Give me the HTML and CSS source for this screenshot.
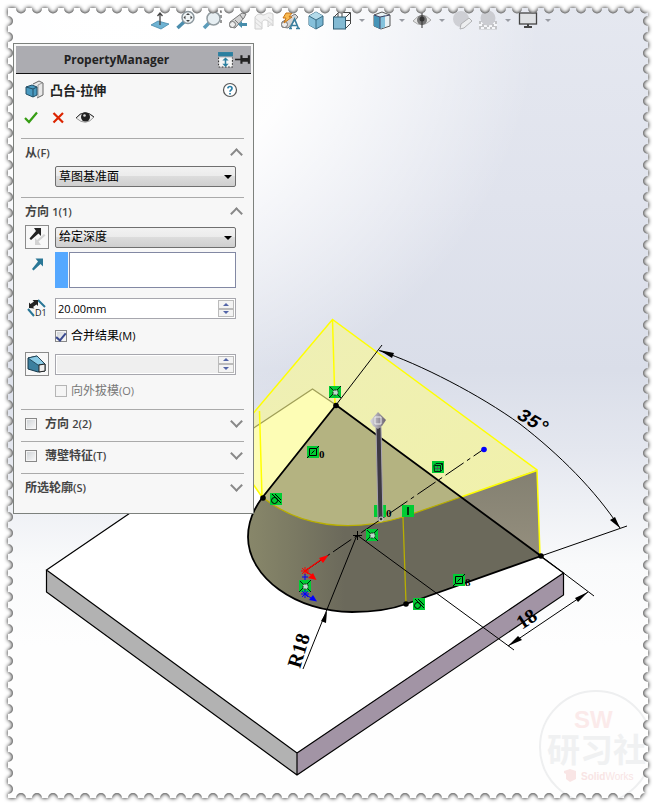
FILE: index.html
```html
<!DOCTYPE html>
<html lang="zh-CN">
<head>
<meta charset="utf-8">
<title>PropertyManager</title>
<link rel="stylesheet" href="styles.css">
</head>
<body>
<main class="stage">

<svg class="scene" viewBox="0 0 655 806" preserveAspectRatio="xMinYMin meet" aria-hidden="true">
  <defs>
    <linearGradient id="sky" x1="0" y1="0" x2="0" y2="1">
      <stop offset="0" stop-color="#e5e8f0"/>
      <stop offset=".25" stop-color="#e0e3ed"/>
      <stop offset=".46" stop-color="#dadee9"/>
      <stop offset=".56" stop-color="#e4e7ef"/>
      <stop offset=".7" stop-color="#f9fafb"/>
      <stop offset=".8" stop-color="#fefefe"/>
    </linearGradient>
    <radialGradient id="glow" gradientUnits="userSpaceOnUse" cx="120" cy="0" r="420">
      <stop offset="0" stop-color="#fff"/>
      <stop offset=".45" stop-color="#fff" stop-opacity=".95"/>
      <stop offset="1" stop-color="#fff" stop-opacity="0"/>
    </radialGradient>
    <linearGradient id="side" gradientUnits="userSpaceOnUse" x1="248" y1="0" x2="345" y2="0">
      <stop offset="0" stop-color="#88876a"/>
      <stop offset=".4" stop-color="#7d7c64"/>
      <stop offset="1" stop-color="#6b695b"/>
    </linearGradient>
    <linearGradient id="wedge" x1="0" y1="0" x2="0" y2="1">
      <stop offset="0" stop-color="#838071"/>
      <stop offset="1" stop-color="#958f7e"/>
    </linearGradient>
    <linearGradient id="rod" x1="0" x2="1">
      <stop offset="0" stop-color="#dddce2"/>
      <stop offset="1" stop-color="#6a6270"/>
    </linearGradient>
    <linearGradient id="lid" x1="0" x2="1" y2="1">
      <stop offset="0" stop-color="#eeefb6"/>
      <stop offset="1" stop-color="#f1f1aa"/>
    </linearGradient>
    <g id="g-box"><rect width="12" height="12" fill="#0c3"/></g>
    <g id="g-coin"><use href="#g-box"/><path d="M0 12 4 8M8 4l4-4M8 8l4 4M4 4 1 1" stroke="#021" fill="none"/><rect x="4" y="4" width="5" height="5" rx="1.500" stroke="#222" stroke-dasharray="2 1" fill="#bdc"/></g>
    <g id="g-plane"><use href="#g-box"/><path d="M2.500 2.500h7v7h-7zM0 12l2.500-2.500M4.500 7.500l3-3M9.500 2.500 12 0" fill="none" stroke="#000"/></g>
    <g id="g-tan"><use href="#g-box"/><circle cx="4.500" cy="7.500" r="3" fill="none" stroke="#000"/><path d="M2 1 11 10M5 1l6 6" stroke="#000"/></g>
    <g id="g-vert"><use href="#g-box"/><path d="M6 2v8" stroke="#000" stroke-width="1.500"/></g>
    <g id="g-cube"><use href="#g-box"/><path d="M2 4.500 4 2.500h6.500v6l-2 2H2.500zM2.500 4.500h6v6M8.500 4.500l2-2" fill="none" stroke="#021"/><path d="M5.500 5v5M3 7.500h5" stroke="#465"/></g>
  </defs>
  <rect width="655" height="806" fill="url(#sky)"/>
  <rect width="655" height="806" fill="url(#glow)"/>

  <!-- watermark -->
  <g>
    <circle cx="596" cy="747" r="56" fill="none" stroke="#eeeff0" stroke-width="2"/>
    <text class="mark-sw" x="574" y="728">SW</text>
    <text class="mark-cn" x="547" y="762">研习社</text>
    <path d="M564 771l6-2 6 2v8l-6 3-4-3v-5l-2-1z" fill="#f9e5e5"/>
    <text class="mark-solid" x="581" y="780"><tspan class="heavy">Solid</tspan>Works</text>
  </g>

  <!-- base plate -->
  <path d="M46 570 312 389 563 573 297 753z" fill="#fff"/>
  <path d="M46 570 297 753V775L46 592z" fill="#b2b2b2"/>
  <path d="M297 753 563 573V595L297 775z" fill="#a294a5"/>
  <path d="M46.500 570 312 389 563.500 573 297 753zM46.500 570v22L297 775 563.500 595V573M297 753v22" fill="none" stroke="#000" stroke-width="1.200"/>

  <!-- extrusion preview -->
  <path d="M332 319.500 537 470 403 517C350 533 300 525 262 497L240 465V429z" fill="url(#lid)"/>
  <path d="M240 437 312.500 389 336 405 262 497 240 470z" fill="#fdfdb5"/>
  <path d="M240 437 312.500 389 336 405" fill="none" stroke="#a09f58" stroke-width="1.300"/>
  <path d="M262 497 336 405 541 556 406 604C390 610 372 612 352 612 296 612 248 577 248 537 248 522 253 509 262 497z" fill="url(#side)"/>
  <path d="M262 497 336 405 461 497 403 517C350 533 300 527 262 497z" fill="#b4b381"/>
  <path d="M461 497 537 470 540 556z" fill="url(#wedge)"/>
  <path d="M240 429 332.500 319.500 537 470 540 555M332.500 319.500 335 405M259.500 411 262 497M240 465 262 497" fill="none" stroke="#ff0" stroke-width="1.500"/>
  <path d="M537 470.500 461 497" stroke="#ff0" stroke-width="1.500"/>
  <path d="M461 497 403 517C350 533 300 527 262 497M403 517 406 603" fill="none" stroke="#b8ae00" stroke-width="1.300"/>
  <path d="M262 498 336 405 541 556 406 604C390 610 372 612 352 612 296 612 248 577 248 537 248 522 253 510 262 498z" fill="none" stroke="#000" stroke-width="1.800"/>
  <g fill="#000"><circle cx="336" cy="405.500" r="2.800"/><circle cx="263" cy="498" r="2.800"/><circle cx="541" cy="556" r="2.800"/><circle cx="406" cy="604" r="2.800"/></g>

  <!-- dimensions -->
  <g fill="none" stroke="#000">
    <path d="M336 405 382 345M541 556 627 526M541 556 594 596M357 535 514 650M508 646 588 592M357 535 303 669"/>
    <path d="M379 350.500C420 364 480 395 520 424 560 455 595 490 620 528"/>
    <path d="M305 571 484 449" stroke-dasharray="22 4 4 4"/>
    <path d="M353 535.500h9M357.500 531v9"/>
  </g>
  <path d="M379 350 394 353 392 358zM620 528 610 520 615 517zM508 646 518 636 522 640zM588 592 578 602 575 598zM327 611 321 621 326 623z"/>
  <circle cx="484" cy="449.500" r="2.800" fill="#00f"/>
  <text class="slant" transform="translate(516 418) rotate(31)">35°</text>
  <text class="dim" transform="translate(522 630) rotate(-34)">18</text>
  <text class="dim" transform="translate(300 669) rotate(-73)">R18</text>

  <!-- relation badges -->
  <use href="#g-coin" x="329" y="386"/>
  <use href="#g-plane" x="307" y="446"/>
  <use href="#g-tan" x="270" y="493"/>
  <use href="#g-cube" x="432" y="461"/>
  <use href="#g-vert" x="374" y="505"/>
  <use href="#g-vert" x="402" y="505"/>
  <use href="#g-coin" x="366" y="529"/>
  <use href="#g-coin" x="299" y="580"/>
  <use href="#g-tan" x="413" y="598"/>
  <use href="#g-plane" x="453" y="574"/>
  <text class="tag" x="319" y="458">0</text>
  <text class="tag" x="386" y="517">0</text>
  <text class="tag" x="465" y="586">8</text>

  <!-- drag handle -->
  <path d="M376 427h5l2 93h-5z" fill="#3d3943" stroke="#a9a5b2"/>
  <path d="M378 412 386 420 382 426 378 429 373 426 370 421z" fill="url(#rod)"/>
  <path d="M375 417h6v7h-6z" fill="none" stroke="#eee"/>
  <circle cx="381" cy="519" r="2" fill="#333" stroke="#ddd"/>

  <!-- origin triad -->
  <g stroke="red" fill="red"><path d="M305 571 322 559M305 571l8 5" stroke-width="1.300"/><path d="M328.500 555 319 558l4 5zM316.500 580 308 578l5-5z" stroke="none"/><path d="M301 571h8M305 567v8M302 568l6 6M308 568l-6 6"/></g>
  <g stroke="#00f" fill="#00f"><path d="M305 574v6M302 577h6M305 594l6 4M301 594h8M305 590v8M302 591l6 6M308 591l-6 6"/><path d="M317 601.500 309 600l4-5z" stroke="none"/></g>
</svg>

<header class="toolbar">
  <button class="tool" aria-label="正视于"><svg viewBox="0 0 20 20"><path d="M1 15 8 11 19 14 11 19z" fill="#6fb3d3" stroke="#4789a9" stroke-width=".8"/><path d="M10 15V4M7.500 6 10 3l2.500 3" fill="none" stroke="#444" stroke-width="1.300"/></svg></button>
  <button class="tool" aria-label="整屏显示"><svg viewBox="0 0 20 20"><path d="M1.500 18 8 12" stroke="#4b8dad" stroke-width="3.500"/><circle cx="12" cy="7.500" r="6" fill="#eff4f6" stroke="#8c979d" stroke-width="1.500"/><path d="M12 3l2 2h-4zM12 12l2-2h-4zM7.500 7.500l2-2v4zM16.500 7.500l-2-2v4z" fill="#444"/></svg></button>
  <button class="tool" aria-label="局部放大"><svg viewBox="0 0 20 20"><path d="M8 1h11v12" fill="none" stroke="#555" stroke-width="1.200" stroke-dasharray="3 2"/><path d="M2 18 7 13" stroke="#5c9cba" stroke-width="3.500"/><circle cx="11.500" cy="8.500" r="6.500" fill="#e7eff3" stroke="#929ca1" stroke-width="1.500"/></svg></button>
  <button class="tool" aria-label="上一视图"><svg viewBox="0 0 20 20"><path d="M2 12 14 3l4 1-2 4-9 10-5-1z" fill="#d5d5d5" stroke="#777"/><path d="M7 10l4 4M12 5l3 4" stroke="#777"/><circle cx="4.500" cy="14.500" r="3" fill="#eee" stroke="#777"/><path d="M10 14.500 14 11v2h5v3h-5v2z" fill="#478dab"/></svg></button>
  <button class="tool faded" aria-label="剖面视图"><svg viewBox="0 0 20 20"><path d="M1 7c3-4 5-3 8-2 3 0 5-4 10-1v12c-2-2-4-1-5 1V11c-3-2-5-1-6 1v7H1z" fill="#e9e9e9" stroke="#b0b0b0"/><path d="M1 8l7 6M1 12l7 6M14 7l5 4M14 11l5 4" stroke="#bbb"/></svg></button>
  <button class="tool" aria-label="动态注解视图"><svg viewBox="0 0 20 20"><path d="M2 12 15 4l3 3L8 18l-6-1z" fill="#d5d5d5" stroke="#777"/><circle cx="4.500" cy="14.500" r="3" fill="#eee" stroke="#777"/><path d="M6 3h6l-3 4h3l-8 6 2-5H3z" fill="#f9b94f" stroke="#c67318"/><path d="M10 18.500 14.500 9l4 9.500M12 15.500h5M9 18.500h3M16 18.500h4" fill="none" stroke="#397f9f" stroke-width="1.600"/></svg></button>
  <button class="tool" aria-label="视图定向"><svg viewBox="0 0 20 20"><path d="M3 6 10 2l7 4v9l-7 4-7-4z" fill="#76b4d1" stroke="#396a82"/><path d="M3 6l7 4v9l-7-4z" fill="#86c0da"/><path d="M3 6 10 2l7 4-7 4z" fill="#b3dae9"/><path d="M3 6l7 4 7-4M10 10v9" fill="none" stroke="#396a82"/></svg></button>
  <button class="tool" aria-label="线架图"><svg viewBox="0 0 20 20"><path d="M6 2.500h12.500V14M2 7l4-4M14 7l4-4M14 18l4-4M10 3v4M6 3v4M14 10.500h4" fill="none" stroke="#444"/><rect x="1.500" y="7" width="12" height="12" fill="#83bad3" stroke="#315f75"/></svg></button>
  <span class="caret"></span>
  <button class="tool" aria-label="显示样式"><svg viewBox="0 0 20 20"><path d="M2 5 10 2l8 3v11l-9 3-7-3z" fill="#e9f1f4" stroke="#555"/><path d="M2 5l6 2v12l-6-3z" fill="#4594b8"/><path d="M8 7l5-2v12l-5 2z" fill="#83c2dd"/><path d="M2 5l6 2 10-2M8 7v12" fill="none" stroke="#446"/></svg></button>
  <span class="caret"></span>
  <button class="tool" aria-label="隐藏项目"><svg viewBox="0 0 20 20"><path d="M1 11Q10 0 19 10 10 19 1 11z" fill="#e5e5e5" stroke="#aaa"/><circle cx="10" cy="10" r="5" fill="#777"/><circle cx="10" cy="9" r="2.500" fill="#333"/><path d="M10 1v17" stroke="#333"/></svg></button>
  <span class="caret"></span>
  <button class="tool faded" aria-label="编辑外观"><svg viewBox="0 0 20 20"><circle cx="9" cy="9" r="8" fill="#bbbbc0"/><path d="M8 19l1-5 8-6 3 3-8 7z" fill="#eee" stroke="#888"/></svg></button>
  <button class="tool faded" aria-label="应用布景"><svg viewBox="0 0 20 20"><path d="M1 11h18v8.500H1z" fill="#aaa"/><path d="M3 12h3v2H3zM14 12h3v2h-3zM1 14h3v2H1zM6 15h3v2H6zM11 15h3v2h-3zM16 14h3v2h-3zM3 17h3v2H3zM9 17h3v2H9zM14 17h3v2h-3z" fill="#fff"/><circle cx="10" cy="8" r="7.500" fill="#b7b7bc"/></svg></button>
  <span class="caret"></span>
  <button class="tool" aria-label="视图设定"><svg viewBox="0 0 20 20"><rect x="1.500" y="3" width="17" height="11" fill="#dfe1e4" stroke="#444" stroke-width="1.300"/><path d="M9 14h2v2h3v2H6v-2h3z" fill="#444"/></svg></button>
  <span class="caret"></span>
</header>

<aside class="panel">
  <div class="panel-bar">
    <h1>PropertyManager</h1>
    <button class="tool" aria-label="展开"><svg viewBox="0 0 16 16"><path d="M1 1h14v4H1z" fill="#2b7fa0"/><path d="M1.500 6v9h13V6" fill="#f4f4f4" stroke="#333" stroke-dasharray="1.500 1.500"/><path d="M8 6 11 9H5zM8 15l-3-3h6zM7.300 8h1.400v5H7.300z" fill="#2b7fa0"/></svg></button>
    <button class="tool" aria-label="固定"><svg viewBox="0 0 16 16"><path d="M1 8h6" stroke="#222" stroke-width="1.500"/><path d="M6 4h2v2.500h5V4h2v8h-2v-2H8v2H6z" fill="#222"/></svg></button>
  </div>

  <div class="feature">
    <svg viewBox="0 0 20 20"><path d="M8 4 14 1l4 2v12l-6 3" fill="#e8e8e8" stroke="#666"/><path d="M13 5l4-2M13 5v12" stroke="#999"/><path d="M1 7 7 5l5 2v8l-4 2-7-3z" fill="#4a9ac0" stroke="#234f66"/><path d="M1 7l7 2 4-2M8 9v8" fill="none" stroke="#234f66"/></svg>
    <h2>凸台-拉伸</h2>
    <button class="help" aria-label="帮助"><svg viewBox="0 0 16 16"><circle cx="8" cy="8" r="6.500" fill="#fff" stroke="#555" stroke-width="1.200"/><path d="M5.800 6.300Q6 4.500 8 4.500t2 1.800Q10 7.500 8.800 8.200 8 8.700 8 9.800M8 11v1.500" fill="none" stroke="#2b7fa8" stroke-width="1.700"/></svg></button>
  </div>

  <div class="actions">
    <button class="tool" aria-label="确定"><svg viewBox="0 0 20 20"><path d="M4 10 8 14 16 4.500" fill="none" stroke="#369d14" stroke-width="2.200"/></svg></button>
    <button class="tool" aria-label="取消"><svg viewBox="0 0 20 20"><path d="M5.500 5 15 14.500M15 5 5.500 14.500" stroke="#dc2400" stroke-width="2.200"/></svg></button>
    <button class="tool" aria-label="细节预览"><svg viewBox="0 0 20 20"><path d="M1 10Q10 0 19 9 11 19 1 10z" fill="#eee" stroke="#999"/><path d="M1 10Q9 0 19 9" fill="none" stroke="#333"/><circle cx="10.500" cy="9" r="4.500" fill="#222"/><circle cx="9.500" cy="7.500" r="1.300" fill="#ddd"/></svg></button>
  </div>

  <section class="group">
    <div class="head"><h3>从<small>(F)</small></h3><button class="fold up" aria-label="折叠"></button></div>
    <div class="row"><span class="pick"><select aria-label="从"><option>草图基准面</option></select></span></div>
  </section>

  <section class="group direction">
    <div class="head"><h3>方向 <small>1(1)</small></h3><button class="fold up" aria-label="折叠"></button></div>
    <div class="row">
      <button class="framed" aria-label="反向"><svg viewBox="0 0 20 20"><path d="M8 18v-7l2 2 7-6 1.500 1.500-7 6 2.500 3.500z" fill="#d3d3d3"/><path d="M14 1v8l-2.500-2.500L4 13l-1.500-1.500L9 4 7 1z" fill="#222"/></svg></button>
      <span class="pick"><select aria-label="终止条件"><option>给定深度</option></select></span>
    </div>
    <div class="row list">
      <svg class="glyph" viewBox="0 0 20 20"><path d="M16 6.500v8l-2.500-2.500-7 6.500L5 17l6-7.500-2.500-3z" fill="#2a7796"/></svg>
      <div class="selection"><textarea aria-label="拉伸方向"></textarea></div>
    </div>
    <div class="row depth">
      <svg class="glyph" viewBox="0 0 20 20"><path d="M1 10 7 17M11 1l7 7" stroke="#2a7796" stroke-width="2"/><path d="M2 9V3.500l1.500 1.500L7 2.500 5.500 1H11v6L9.500 5.500 6 8 7.500 9.500z" fill="#222"/><text class="icon-d1" x="8" y="17">D1</text></svg>
      <span class="spin"><input type="text" value="20.00mm" aria-label="深度"><span class="steps"><button aria-label="增加"></button><button class="down" aria-label="减少"></button></span></span>
    </div>
    <div class="check"><input type="checkbox" id="merge" checked><label for="merge">合并结果<span>(M)</span></label></div>
    <div class="row">
      <button class="framed" aria-label="拔模"><svg viewBox="0 0 20 20"><path d="M1 4 10 2l8 8v7l-7 1L1 15z" fill="#3c7f9f" stroke="#16384a"/><path d="M1 4l9-2 8 8-7 1z" fill="#8bcbe6" stroke="#16384a" stroke-width=".8"/><path d="M12 11l6-1v7l-6 1z" fill="#eee" stroke="#222"/></svg></button>
      <span class="spin off"><input type="text" disabled aria-label="拔模角度"><span class="steps"><button aria-label="增加"></button><button class="down" aria-label="减少"></button></span></span>
    </div>
    <div class="check last"><input type="checkbox" id="draft" disabled><label for="draft">向外拔模<span>(O)</span></label></div>
  </section>

  <section class="group">
    <div class="head"><input type="checkbox" id="dir2"><h3><label for="dir2">方向 <small>2(2)</small></label></h3><button class="fold" aria-label="展开"></button></div>
  </section>
  <section class="group">
    <div class="head"><input type="checkbox" id="thin"><h3><label for="thin">薄壁特征<small>(T)</small></label></h3><button class="fold" aria-label="展开"></button></div>
  </section>
  <section class="group">
    <div class="head"><h3>所选轮廓<small>(S)</small></h3><button class="fold" aria-label="展开"></button></div>
  </section>
</aside>

<svg class="frame" viewBox="0 0 655 806" preserveAspectRatio="none" aria-hidden="true">
  <defs>
    <g id="holes" fill="none" stroke-width="10" stroke-linecap="round" stroke-dasharray="0 16">
      <path d="M21 8.500H646M21 798H646M8 21V796M648 21V796"/>
    </g>
    <mask id="inside"><rect x="8" y="8" width="640" height="790" fill="#fff"/><use href="#holes" stroke="#000"/></mask>
    <mask id="outside"><rect width="655" height="806" fill="#fff"/><rect x="8" y="8" width="640" height="790" fill="#000"/><use href="#holes" stroke="#fff"/></mask>
    <filter id="soft" x="-5%" y="-5%" width="110%" height="110%"><feGaussianBlur stdDeviation="2"/></filter>
  </defs>
  <g mask="url(#outside)">
    <rect width="655" height="806" fill="#fff"/>
    <g filter="url(#soft)"><rect width="655" height="806" fill="#000" mask="url(#inside)"/></g>
  </g>
</svg>
</main>
</body>
</html>
```
FILE: styles.css
```css
* { box-sizing: border-box; }

body {
  margin: 0;
  background: #fff;
  color: #222;
  font: 12px/16px "Open Sans", "Noto Sans CJK SC", sans-serif;
}

button {
  padding: 0;
  border: 0;
  background: none;
}

svg { display: block; }

.stage {
  position: relative;
  min-height: 100vh;
  padding: 10px 13px;
  overflow: hidden;
}

.scene,
.frame {
  position: absolute;
  inset: 0;
  width: 100%;
  height: 100%;
}

.frame { pointer-events: none; }

.dim { font: bold 20px "Liberation Serif", serif; }
.slant { font: italic bold 19px "Liberation Mono", monospace; }
.tag { font: bold 11px "Liberation Serif", serif; }
.mark-sw { font: bold 24px "Liberation Sans", sans-serif; fill: #fbeaea; }
.mark-cn { font: bold 33px "Noto Sans CJK SC", sans-serif; fill: #f0f1f2; }
.mark-solid { font: 10px "Liberation Sans", sans-serif; fill: #f8e4e4; }
.heavy { font-weight: bold; }
.icon-d1 { font: 9px "Open Sans", sans-serif; fill: #222; }

/* view toolbar */
.toolbar {
  position: relative;
  display: flex;
  align-items: center;
  gap: 6px;
  padding-left: 137px;
}

.tool { width: 20px; height: 20px; }
.tool svg { width: 100%; height: 100%; }
.faded { opacity: .6; }

.caret {
  width: 6px;
  margin: 0 1px;
  border: 3px solid transparent;
  border-top-color: #999ca3;
  border-bottom: 0;
}

/* property panel */
.panel {
  position: relative;
  width: 241px;
  margin-top: 13px;
  padding: 2px 2px 8px;
  border: 1px solid #7d817d;
  background: #f7f7f7;
}

.panel-bar {
  display: flex;
  align-items: center;
  height: 28px;
  border-bottom: 1px solid #111;
  background: #acacb1;
}

.panel-bar h1 {
  flex: 1;
  margin: 0;
  font-size: 12px;
  font-weight: bold;
  line-height: 26px;
  text-align: center;
}

.panel-bar .tool { width: 17px; height: 17px; }

.feature {
  display: flex;
  align-items: center;
  gap: 5px;
  height: 32px;
  padding: 0 13px 0 9px;
}

.feature > svg { width: 20px; height: 20px; }
.feature h2 { flex: 1; margin: 0; font-size: 13px; }
.help svg { width: 16px; height: 16px; }

.actions {
  display: flex;
  align-items: center;
  gap: 7px;
  height: 32px;
  padding: 0 5px 8px;
}

.group {
  margin: 0 7px 0 5px;
  padding: 0 8px 0 4px;
  border-top: 1px solid #aaa;
}

.group:first-of-type { padding-bottom: 10px; }

.head {
  display: flex;
  align-items: center;
  height: 28px;
  margin-bottom: 3px;
}

.head:not(:last-child) { height: 27px; margin-bottom: 0; }

.head h3 {
  flex: 1;
  margin: 0;
  color: #444;
  font-size: 12px;
}

.head small { font-size: 11px; font-weight: 600; }
.head input { margin-right: 8px; }

.fold {
  width: 16px;
  height: 16px;
  display: grid;
  place-items: center;
  margin-right: -8px;
}

.fold::before {
  content: "";
  width: 7px;
  height: 7px;
  margin-bottom: 5px;
  border: solid #888;
  border-width: 0 2px 2px 0;
  transform: rotate(45deg);
}

.fold.up::before {
  margin: 4px 0 0;
  transform: rotate(225deg);
}

.row {
  display: grid;
  grid-template-columns: 24px 1fr;
  align-items: center;
  gap: 6px;
}

.row > :last-child { grid-column: 2; }
.direction .row { min-height: 24px; }
.direction .list { margin: 3px 0 10px; align-items: start; }
.direction .depth { min-height: 21px; }

.glyph { width: 20px; height: 20px; margin-left: 2px; }

.framed {
  width: 24px;
  height: 24px;
  padding: 1px;
  border: 1px solid #8b8b8b;
  background: #f8f8f8;
}

.pick { position: relative; }

.pick select {
  display: block;
  width: 100%;
  height: 21px;
  padding: 0 16px 0 3px;
  appearance: none;
  border: 1px solid #6f6f6f;
  border-radius: 2px;
  background: linear-gradient(#f2f2f2, #ebebeb 50%, #dcdcdc 50%, #cfcfcf);
  color: #000;
  font: inherit;
}

.pick::after {
  content: "";
  position: absolute;
  top: 9px;
  right: 4px;
  border: 4px solid transparent;
  border-top-color: #000;
  border-bottom: 0;
}

.selection {
  display: grid;
  min-width: 0;
  height: 36px;
  padding-left: 1px;
  border-left: 13px solid #55a8ff;
  background: #f7f7f7;
}

.selection textarea {
  width: 100%;
  height: 36px;
  min-width: 0;
  border: 1px solid #8288a3;
  background: #fff;
  resize: none;
}

.spin {
  display: flex;
  height: 21px;
  padding: 1px;
  border: 1px solid #a7a7ae;
  background: #fff;
}

.spin input {
  flex: 1;
  min-width: 0;
  padding: 0 1px;
  border: 0;
  background: transparent;
  color: #000;
  font: inherit;
  font-size: 11px;
}

.off input { background: #efefef; }

.steps {
  display: grid;
  width: 16px;
}

.steps button {
  display: grid;
  place-items: center;
  border: 1px solid #bbb;
  background: #f3f3f3;
}

.steps button::before {
  content: "";
  border: 3px solid transparent;
  border-top: 0;
  border-bottom-color: #5365a8;
}

.steps .down::before { transform: rotate(180deg); }

.check {
  display: flex;
  align-items: center;
  height: 33px;
  padding-left: 30px;
  color: #000;
}

.check span { font-size: 11px; }
.check.last { height: 29px; margin-bottom: 4px; color: #777; }

input[type="checkbox"] {
  display: grid;
  place-items: center;
  width: 12px;
  height: 12px;
  margin: 0 4px 0 0;
  appearance: none;
  border: 1px solid #888;
  background: linear-gradient(135deg, #ccd0d4, #fafafa);
  box-shadow: inset 0 0 0 1px #f4f4f4;
}

.head input[type="checkbox"] { margin-right: 8px; }

input[type="checkbox"]:disabled { border-color: #b5b5b5; background: #f5f5f5; }

input[type="checkbox"]:checked::before {
  content: "";
  width: 4px;
  height: 8px;
  margin-bottom: 2px;
  border: solid #39498f;
  border-width: 0 2px 2px 0;
  transform: rotate(40deg);
}
```
